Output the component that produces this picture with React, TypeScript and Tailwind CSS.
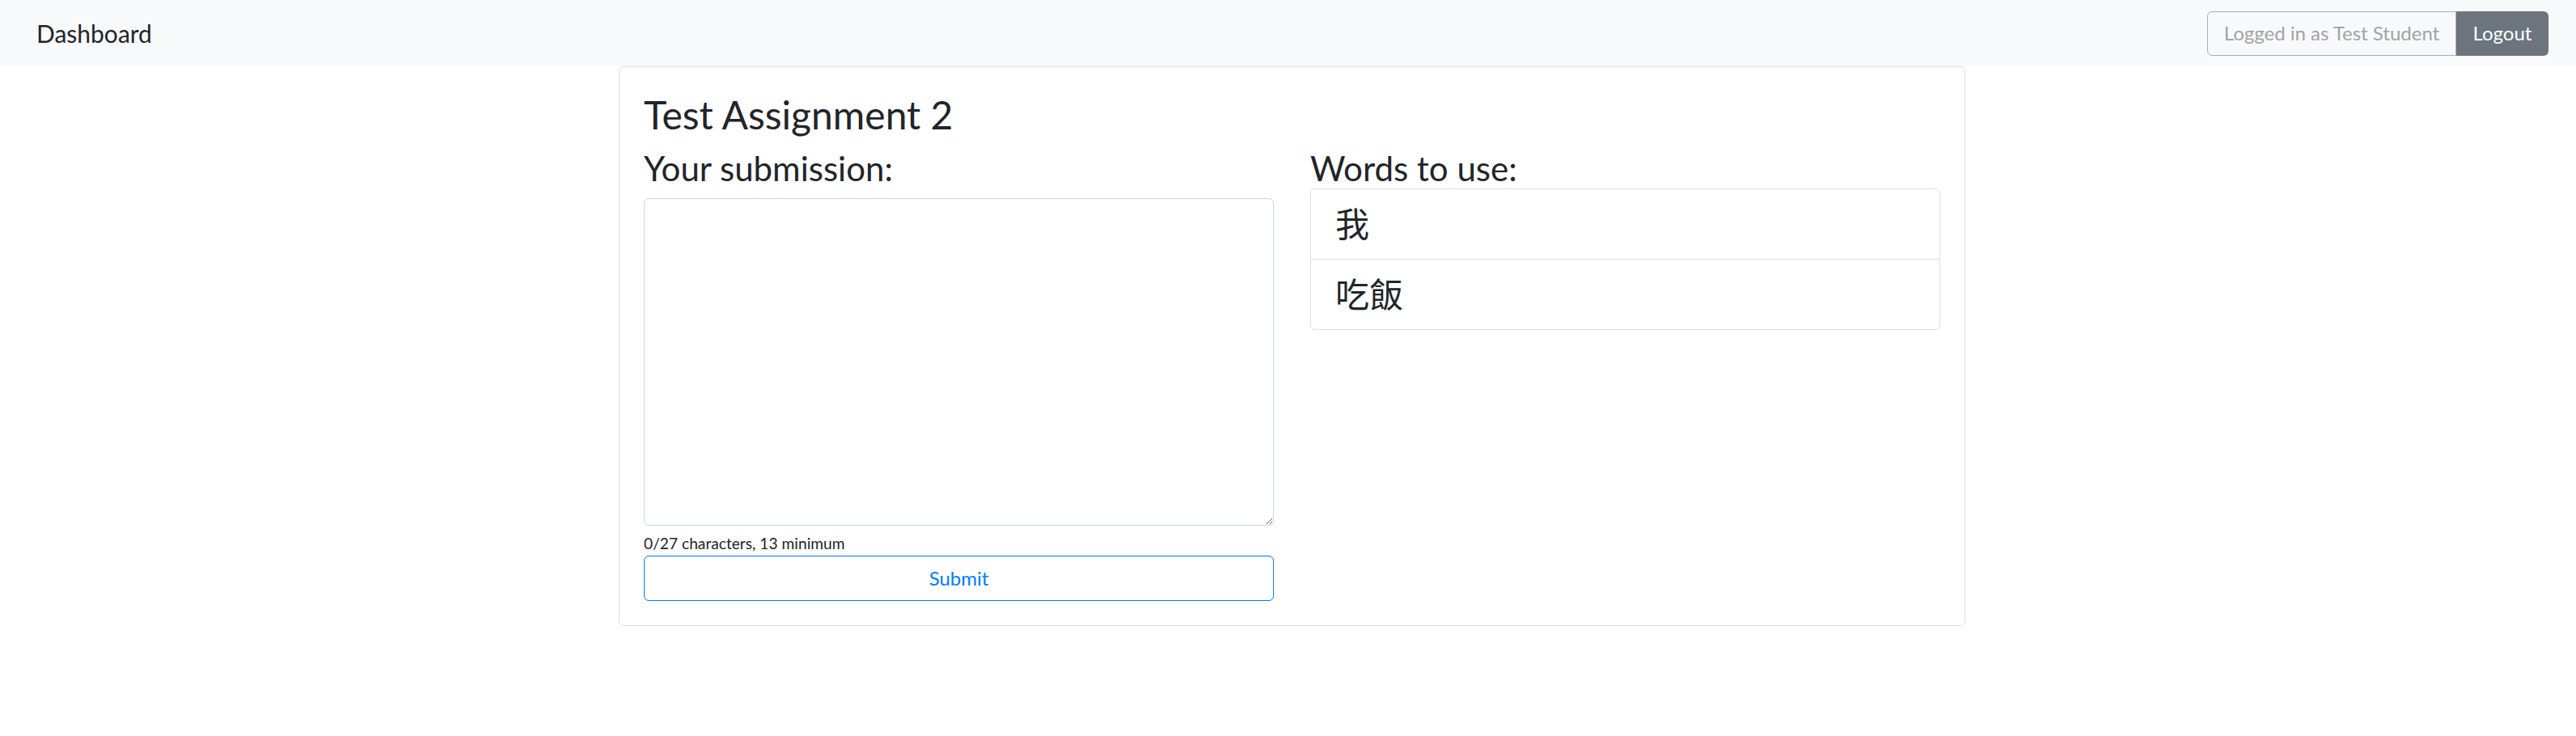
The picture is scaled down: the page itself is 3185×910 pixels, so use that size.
export default function App() {
  const words = ["我", "吃飯"];

  return (
    <div
      className="min-h-screen bg-white text-[#212529] text-[24px] leading-[1.5]"
      style={{ fontFamily: 'Lato, "Noto Sans CJK TC", sans-serif' }}
    >
      <nav className="h-[82px] bg-[#f8f9fa] flex items-center justify-between pl-[45px] pr-[34px]">
        <a className="text-[30px] leading-[45px] text-[#212529]">Dashboard</a>
        <div className="flex h-[55px]">
          <span className="w-[308px] flex items-center justify-center border border-[#a7acb1] rounded-l-[6px] text-[#a3a3a3]">
            Logged in as Test Student
          </span>
          <button className="w-[114px] flex items-center justify-center bg-[#6c757d] text-white rounded-r-[6px]">
            Logout
          </button>
        </div>
      </nav>

      <div className="ml-[765px] w-[1665px] border border-[#dfdfdf] rounded-[6px] p-[30px]">
        <h2 className="text-[48px] leading-[1.2] mb-[12px]">Test Assignment 2</h2>
        <div className="grid grid-cols-2 gap-[45px]">
          <div>
            <h3 className="text-[42px] leading-[1.2] mb-[12px]">Your submission:</h3>
            <textarea className="block w-full h-[405px] border border-[#ced4da] rounded-[6px] bg-white px-[18px] py-[9px] outline-none" />
            <small className="block mt-[7px] h-[29px] text-[19.2px] leading-[29px]">
              0/27 characters, 13 minimum
            </small>
            <button className="mt-[1px] w-full h-[56px] border border-[#007bff] rounded-[6px] text-[#007bff] bg-transparent">
              Submit
            </button>
          </div>
          <div>
            <h3 className="text-[42px] leading-[1.2]">Words to use:</h3>
            <ul className="border border-[#dfdfdf] rounded-[6px] divide-y divide-[#dfdfdf]">
              {words.map((w) => (
                <li key={w} className="px-[30px] py-[18px]">
                  <h3 className="text-[42px] leading-[50px]">{w}</h3>
                </li>
              ))}
            </ul>
          </div>
        </div>
      </div>
    </div>
  );
}
